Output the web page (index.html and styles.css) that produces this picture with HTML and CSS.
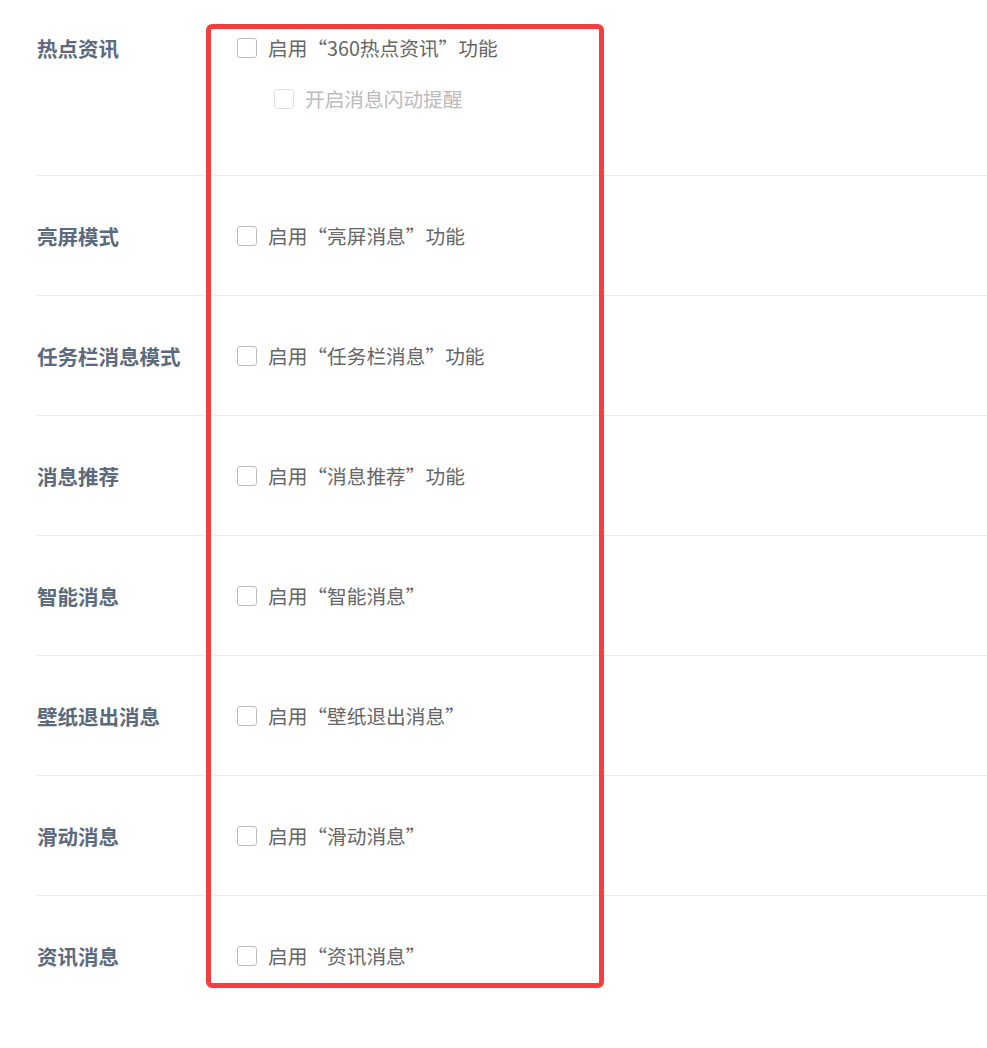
FILE: index.html
```html
<!DOCTYPE html>
<html lang="zh-CN">
  <head>
    <meta charset="UTF-8" />
    <meta name="viewport" content="width=device-width, initial-scale=1.0" />
    <title>消息设置</title>
    <link rel="stylesheet" href="styles.css">
  </head>
  <body>
    <div class="settings">
      <div class="row row-first">
        <div class="label">热点资讯</div>
        <div class="options">
          <label class="option"><span class="box"></span>启用“360热点资讯”功能</label>
          <label class="option sub disabled"><span class="box"></span>开启消息闪动提醒</label>
        </div>
      </div>
      <div class="row">
        <div class="label">亮屏模式</div>
        <div class="options">
          <label class="option"><span class="box"></span>启用“亮屏消息”功能</label>
        </div>
      </div>
      <div class="row">
        <div class="label">任务栏消息模式</div>
        <div class="options">
          <label class="option"><span class="box"></span>启用“任务栏消息”功能</label>
        </div>
      </div>
      <div class="row">
        <div class="label">消息推荐</div>
        <div class="options">
          <label class="option"><span class="box"></span>启用“消息推荐”功能</label>
        </div>
      </div>
      <div class="row">
        <div class="label">智能消息</div>
        <div class="options">
          <label class="option"><span class="box"></span>启用“智能消息”</label>
        </div>
      </div>
      <div class="row">
        <div class="label">壁纸退出消息</div>
        <div class="options">
          <label class="option"><span class="box"></span>启用“壁纸退出消息”</label>
        </div>
      </div>
      <div class="row">
        <div class="label">滑动消息</div>
        <div class="options">
          <label class="option"><span class="box"></span>启用“滑动消息”</label>
        </div>
      </div>
      <div class="row row-last">
        <div class="label">资讯消息</div>
        <div class="options">
          <label class="option"><span class="box"></span>启用“资讯消息”</label>
        </div>
      </div>
      <div class="highlight"></div>
    </div>
  </body>
</html>
```

FILE: styles.css
```css
body {
  margin: 0;
  background: #fff;
  font-family: "Noto Sans CJK SC", "Noto Sans", sans-serif;
}

.settings {
  position: relative;
  padding-left: 37px;
}

.row {
  display: flex;
  align-items: center;
  height: 120px;
  padding-top: 1px;
  box-sizing: border-box;
  border-top: 1px solid #ededed;
}

.row-first {
  align-items: flex-start;
  height: 175px;
  padding-top: 36px;
  border-top: none;
}

.label {
  width: 200px;
  flex-shrink: 0;
  font-size: 20.5px;
  line-height: 24px;
  font-weight: bold;
  color: #5b6a7d;
}

.options {
  display: flex;
  flex-direction: column;
  gap: 27px;
}

.option {
  display: flex;
  align-items: center;
  gap: 11px;
  font-size: 19.7px;
  line-height: 24px;
  color: #666;
  cursor: pointer;
}

.box {
  width: 20px;
  height: 20px;
  box-sizing: border-box;
  border: 1px solid #bdbdbd;
  border-radius: 3px;
  background: #fff;
}

.sub {
  margin-left: 37px;
}

.disabled {
  color: #bbb;
  cursor: default;
}

.disabled .box {
  border-color: #e2e2e2;
}

.highlight {
  position: absolute;
  left: 206px;
  top: 24px;
  width: 398px;
  height: 964px;
  box-sizing: border-box;
  border: 5px solid #f53f3f;
  border-radius: 6px;
  pointer-events: none;
}
```
